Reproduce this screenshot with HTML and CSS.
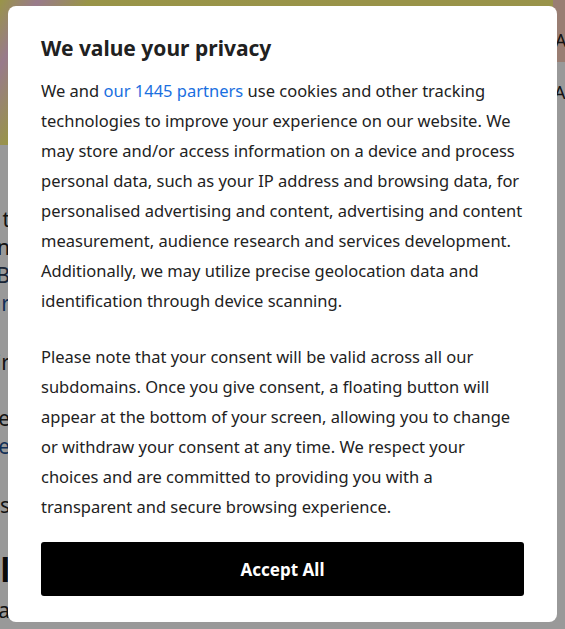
FILE: index.html
```html
<!DOCTYPE html>
<html lang="en">
<head>
<meta charset="utf-8">
<title>Privacy</title>
<link rel="stylesheet" href="styles.css">
</head>
<body>
<div class="page">
  <header class="hero">
    <div class="hero-art"></div>
    <div class="hero-side">
      <div class="topbar"><span class="topbar-text">A</span></div>
      <div class="side-text">Al</div>
    </div>
  </header>
  <main class="content">
    <p class="bg-line">Get t</p>
    <p class="bg-line">Open</p>
    <p class="bg-line dark-blue">BB</p>
    <p class="bg-line link">Star</p>
    <p class="bg-line g5">Pair</p>
    <p class="bg-line g6">The</p>
    <p class="bg-line link">Rate</p>
    <p class="bg-line g8">Yes</p>
    <p class="bg-heading">Buildl</p>
    <p class="bg-line g10">Data</p>
  </main>
</div>

<div class="overlay">
  <section class="modal" role="dialog" aria-labelledby="modal-title">
    <h2 id="modal-title" class="modal-title">We value your privacy</h2>
    <p class="modal-text">We and <a href="#" class="modal-link">our 1445 partners</a> use cookies and other tracking technologies to improve your experience on our website. We may store and/or access information on a device and process personal data, such as your IP address and browsing data, for personalised advertising and content, advertising and content measurement, audience research and services development. Additionally, we may utilize precise geolocation data and identification through device scanning.</p>
    <p class="modal-text">Please note that your consent will be valid across all our subdomains. Once you give consent, a floating button will appear at the bottom of your screen, allowing you to change or withdraw your consent at any time. We respect your choices and are committed to providing you with a transparent and secure browsing experience.</p>
    <button class="accept-btn" type="button">Accept All</button>
  </section>
</div>
</body>
</html>
```

FILE: styles.css
```css
html, body {
  margin: 0;
  padding: 0;
}

body {
  font-family: "Noto Sans", "Open Sans", sans-serif;
  background: #ffffff;
  color: #222222;
  width: 565px;
  height: 629px;
  overflow: hidden;
}

.page {
  width: 565px;
}

.hero {
  display: grid;
  grid-template-columns: 1fr 12px;
  height: 145px;
}

.hero-art {
  background:
    linear-gradient(120deg, rgba(255,210,250,0) 0%, rgba(255,200,245,0.9) 6%, rgba(255,210,250,0) 14%),
    linear-gradient(160deg, #fff878 0%, #fff57c 60%, #f8f087 100%);
}

.hero-side {
  display: flex;
  flex-direction: column;
  background: #ffffff;
}

.topbar {
  height: 62px;
  box-sizing: border-box;
  background: #ffd3c0;
  display: flex;
  align-items: flex-end;
  padding-bottom: 9px;
}

.topbar-text {
  font-size: 18px;
  line-height: 26px;
  color: #222;
  padding-left: 2px;
}

.side-text {
  font-size: 18px;
  color: #222;
  padding-top: 18px;
  padding-left: 1px;
}

.content {
  padding-top: 60px;
  width: 10px;
}

.bg-line {
  margin: 0;
  display: flex;
  justify-content: flex-end;
  white-space: nowrap;
  font-size: 21px;
  line-height: 28px;
  color: #222;
}

.bg-line.dark-blue {
  color: #2a3c5a;
}

.bg-line.link {
  color: #1d4f91;
}

.bg-line.g5 { margin-top: 31px; }
.bg-line.g6 { margin-top: 28px; }
.bg-line.g8 { margin-top: 31px; }
.bg-line.g10 { margin-top: 8px; }

.bg-heading {
  margin: 33px 0 0 0;
  display: flex;
  justify-content: flex-end;
  white-space: nowrap;
  font-size: 32px;
  font-weight: 700;
  line-height: 36px;
  color: #111;
}

.overlay {
  position: fixed;
  inset: 0;
  background: rgba(0, 0, 0, 0.4);
}

.modal {
  position: absolute;
  left: 8px;
  top: 6px;
  width: 549px;
  height: 616px;
  box-sizing: border-box;
  background: #ffffff;
  border-radius: 8px;
  padding: 28px 33px 26px 33px;
  display: flex;
  flex-direction: column;
}

.modal-title {
  margin: 0 0 14px 0;
  font-size: 21px;
  font-weight: 700;
  line-height: 28px;
  color: #212121;
}

.modal-text {
  margin: 0 0 26px 0;
  font-size: 16.5px;
  line-height: 30px;
  color: #222222;
}

.modal-text:last-of-type {
  margin-bottom: 20px;
}

.modal-link {
  color: #1a6fe0;
  text-decoration: none;
}

.accept-btn {
  flex-shrink: 0;
  height: 54px;
  width: 100%;
  border: none;
  border-radius: 3px;
  background: #000000;
  color: #ffffff;
  font-family: inherit;
  font-size: 17px;
  font-weight: 700;
  cursor: pointer;
}
```
